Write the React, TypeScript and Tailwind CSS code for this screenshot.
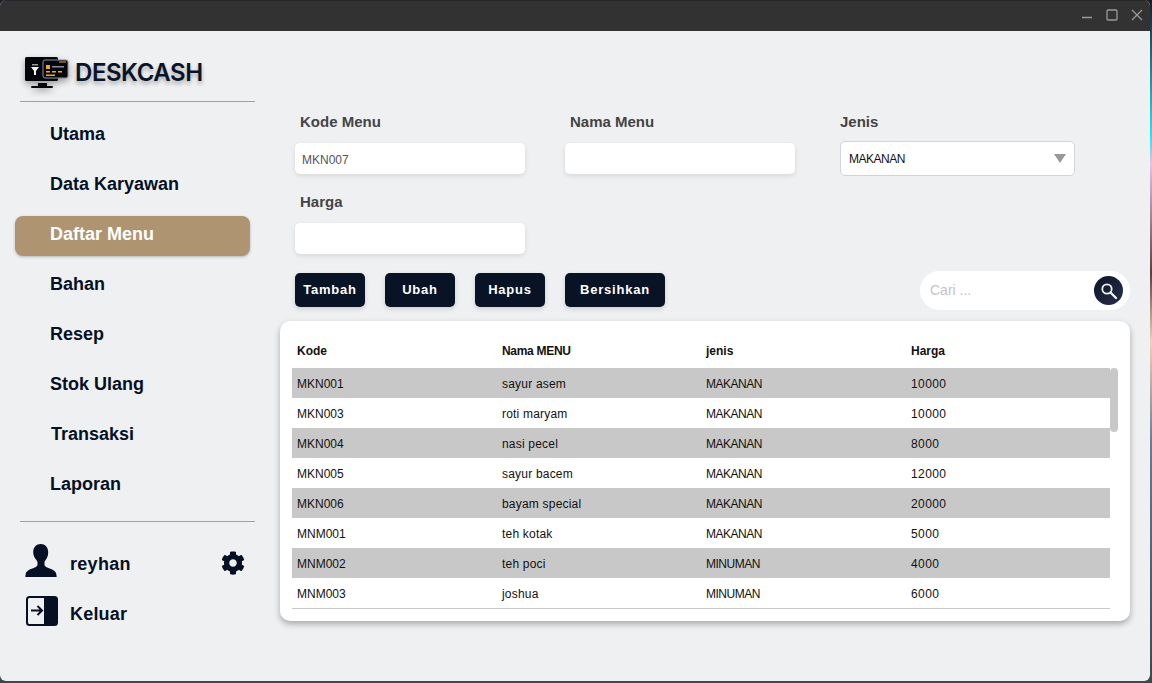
import { FaCog } from "react-icons/fa";

const navItems = ["Utama", "Data Karyawan", "Daftar Menu", "Bahan", "Resep", "Stok Ulang", "Transaksi", "Laporan"];

const rows = [
  ["MKN001", "sayur asem", "MAKANAN", "10000"],
  ["MKN003", "roti maryam", "MAKANAN", "10000"],
  ["MKN004", "nasi pecel", "MAKANAN", "8000"],
  ["MKN005", "sayur bacem", "MAKANAN", "12000"],
  ["MKN006", "bayam special", "MAKANAN", "20000"],
  ["MNM001", "teh kotak", "MAKANAN", "5000"],
  ["MNM002", "teh poci", "MINUMAN", "4000"],
  ["MNM003", "joshua", "MINUMAN", "6000"],
];

function LogoIcon() {
  return (
    <svg width="46" height="34" viewBox="0 0 46 34" className="drop-shadow-[0_3px_3px_rgba(0,0,0,0.35)]">
      <rect x="0" y="1" width="33" height="24" rx="1.5" fill="#05060c" />
      <rect x="13" y="27" width="9" height="3" fill="#05060c" />
      <rect x="6" y="30" width="22" height="2" rx="1" fill="#05060c" />
      <path d="M6 11h8l-3 4v4h-2v-4z" fill="#f4f4f4" />
      <rect x="7" y="8" width="6" height="1.5" fill="#9a9a9a" />
      <rect x="18" y="4" width="25" height="18" rx="2" fill="#05060c" stroke="#8a8f98" strokeWidth="1" />
      <rect x="21" y="9" width="4" height="4" fill="#f5a623" />
      <rect x="27" y="10" width="12" height="1.5" fill="#8a8f98" />
      <rect x="34" y="5.5" width="7" height="1" fill="#f5a623" />
      <rect x="21" y="15" width="4" height="1.5" fill="#f5a623" />
      <rect x="27" y="15" width="4" height="1.5" fill="#f5a623" />
      <rect x="33" y="15" width="4" height="1.5" fill="#f5a623" />
      <rect x="21" y="18.500" width="9" height="1.5" fill="#f5a623" />
    </svg>
  );
}

function UserIcon() {
  return (
    <svg width="32" height="34" viewBox="0 0 32 34" fill="#051024">
      <path d="M15.700 0c4.400 0 7.500 3.200 7.500 8.200 0 3.300-1.200 6.300-2.900 8.200-.6.700-.8 1.300-.8 2.200v2.200c0 1.500 1.500 2.300 3.800 3.200 3.700 1.300 7.300 2.700 8 6l.4 3H.3l.4-3c.7-3.300 4.300-4.700 8-6 2.300-.9 3.800-1.700 3.800-3.200v-2.200c0-.9-.2-1.500-.8-2.200-1.700-1.900-3.500-4.900-3.500-8.200C8.200 3.200 11.300 0 15.700 0z" />
    </svg>
  );
}

function ExitIcon() {
  return (
    <svg width="34" height="32" viewBox="0 0 34 32">
      <rect x="1" y="1" width="32" height="30" rx="3.500" fill="#051024" />
      <path d="M3 4.500A1.500 1.500 0 0 1 4.500 3H19v26H4.500A1.500 1.500 0 0 1 3 27.500z" fill="#eff0f2" />
      <path d="M6 15.500h10.500M12.500 11l4.500 4.500-4.500 4.500" fill="none" stroke="#051024" strokeWidth="2" />
    </svg>
  );
}

function Sidebar() {
  return (
    <aside className="flex w-[280px] shrink-0 flex-col pt-[25px]">
      <div className="ml-[25px] flex h-[34px] items-center gap-[4px]">
        <LogoIcon />
        <span className="font-['Inter',sans-serif] text-[24px] font-semibold tracking-[-0.45px] text-[#0a1428] [text-shadow:0_3px_4px_rgba(0,0,0,0.3)]">
          DESKCASH
        </span>
      </div>
      <div className="ml-[20px] mt-[11px] h-px w-[235px] bg-[#98a2ad]" />
      <nav className="mt-[12px] flex flex-col gap-[10px]">
        {navItems.map((item) => (
          <div
            key={item}
            className={
              item === "Daftar Menu"
                ? "-mb-[2px] ml-[15px] mt-[2px] flex h-[40px] w-[235px] items-center rounded-[8px] bg-[#ae9471] pb-[4px] pl-[35px] text-[18px] font-bold text-white shadow-[0_1px_3px_rgba(0,0,0,0.25)]"
                : item === "Transaksi"
                  ? "ml-[15px] flex h-[40px] w-[235px] items-center pl-[36px] text-[18px] font-bold text-[#051024]"
                  : "ml-[15px] flex h-[40px] w-[235px] items-center pl-[35px] text-[18px] font-bold text-[#051024]"
            }
          >
            {item}
          </div>
        ))}
      </nav>
      <div className="ml-[20px] mt-[17px] h-px w-[235px] bg-[#98a2ad]" />
      <div className="ml-[25px] mt-[22px] flex h-[34px] w-[220px] items-start">
        <UserIcon />
        <span className="ml-[13px] mt-[7px] flex-1 text-[18px] font-bold tracking-[0.3px] text-[#051024]">reyhan</span>
        <FaCog className="mt-[7px] text-[24px] text-[#051024]" />
      </div>
      <div className="ml-[25px] mt-[17px] flex h-[34px] items-start">
        <ExitIcon />
        <span className="ml-[11px] mt-[6px] text-[18px] font-bold tracking-[0.2px] text-[#051024]">Keluar</span>
      </div>
    </aside>
  );
}

function Field({ label, value }: { label: string; value?: string }) {
  return (
    <div className="w-[230px]">
      <div className="h-[20px] pl-[5px] text-[15px] font-bold leading-[20px] text-[#444444]">{label}</div>
      <div className="mt-[11px] flex h-[31px] items-center rounded-[5px] bg-white pl-[7px] pt-[2px] text-[12px] text-[#555555] shadow-[0_2px_5px_rgba(0,0,0,0.1)]">
        {value}
      </div>
    </div>
  );
}

function Form() {
  return (
    <div className="ml-[15px] flex w-[795px] flex-col">
      <div className="flex">
        <Field label="Kode Menu" value="MKN007" />
        <div className="ml-[40px]">
          <Field label="Nama Menu" />
        </div>
        <div className="ml-[45px] w-[235px]">
          <div className="h-[20px] text-[15px] font-bold leading-[20px] text-[#444444]">Jenis</div>
          <div className="mt-[9px] flex h-[35px] items-center justify-between rounded-[5px] border border-[#d0d4da] bg-white pl-[8px] pr-[8px] text-[12px] tracking-[-0.5px] text-[#111111]">
            MAKANAN
            <span className="h-0 w-0 border-x-[6px] border-t-[9px] border-x-transparent border-t-[#999999]" />
          </div>
        </div>
      </div>
      <div className="mt-[16px]">
        <Field label="Harga" />
      </div>
    </div>
  );
}

function Actions() {
  const buttons = [
    { label: "Tambah", w: "w-[70px]" },
    { label: "Ubah", w: "w-[70px]" },
    { label: "Hapus", w: "w-[70px]" },
    { label: "Bersihkan", w: "w-[100px]" },
  ];
  return (
    <div className="ml-[15px] mr-[20px] mt-[16px] flex h-[39px] items-center justify-between">
      <div className="flex gap-[20px]">
        {buttons.map((b) => (
          <div
            key={b.label}
            className={`${b.w} flex h-[34px] items-center justify-center rounded-[5px] bg-[#081325] text-[13px] font-bold tracking-[0.8px] text-white shadow-[0_2px_5px_rgba(0,0,0,0.15)]`}
          >
            {b.label}
          </div>
        ))}
      </div>
      <div className="mt-[2px] flex h-[39px] w-[210px] items-center justify-between rounded-full bg-white pl-[10px] pr-[7px] text-[14px] text-[#c4c4c4]">
        Cari ...
        <span className="flex h-[29px] w-[29px] items-center justify-center rounded-full bg-gradient-to-br from-[#0b1428] to-[#27304a]">
          <svg width="18" height="18" viewBox="0 0 18 18" fill="none" stroke="#f2f2f2">
            <circle cx="7" cy="7" r="4.700" strokeWidth="1.800" />
            <path d="M10.500 10.500 16 16" strokeWidth="2.400" strokeLinecap="round" />
          </svg>
        </span>
      </div>
    </div>
  );
}

function MenuTable() {
  return (
    <div className="mr-[20px] mt-[12px] flex h-[300px] flex-col rounded-[10px] bg-white px-[12px] shadow-[0_3px_6px_rgba(0,0,0,0.3)]">
      <div className="grid h-[47px] w-[818px] shrink-0 grid-cols-[205px_204px_205px_1fr] items-center pl-[5px] pt-[13px] text-[12px] font-bold text-[#111111]">
        <span>Kode</span>
        <span className="tracking-[-0.3px]">Nama MENU</span>
        <span>jenis</span>
        <span>Harga</span>
      </div>
      <div className="relative h-[241px] w-[818px] border-b border-[#c8c8c8]">
        {rows.map((row, i) => (
          <div
            key={row[0]}
            className={`grid h-[30px] grid-cols-[205px_204px_205px_1fr] items-center pl-[5px] pt-[2px] text-[12px] text-[#111111] ${
              i % 2 === 0 ? "bg-[#c8c8c8]" : "bg-white"
            }`}
          >
            <span>{row[0]}</span>
            <span className="tracking-[0.2px]">{row[1]}</span>
            <span className="tracking-[-0.5px]">{row[2]}</span>
            <span className="tracking-[0.4px]">{row[3]}</span>
          </div>
        ))}
        <div className="absolute left-[818px] top-0 h-[64px] w-[8px] rounded-full bg-[#c8c8c8]" />
      </div>
    </div>
  );
}

export default function App() {
  return (
    <div className="flex h-[683px] w-[1152px] flex-col overflow-hidden bg-[linear-gradient(180deg,#1a1a24_0%,#30e0f0_20%,#e8c0e0_24%,#5a4040_40%,#f0d0b8_50%,#6a7a90_65%,#3a4a4a_100%)] font-['Liberation_Sans',sans-serif]">
      <div className="flex h-[681px] w-[1150px] flex-col overflow-hidden rounded-[6px] bg-[#eff0f2]">
        <div className="flex h-[31px] shrink-0 items-center justify-end gap-[13px] border-t border-[#23272a] bg-[#323232] pb-[3px] pr-[7px]">
          <svg width="12" height="12" viewBox="0 0 12 12" stroke="#9a9a9a" strokeWidth="1.500">
            <path d="M1 8.500h10" />
          </svg>
          <svg width="12" height="12" viewBox="0 0 12 12" fill="none" stroke="#9a9a9a" strokeWidth="1.300">
            <rect x="1" y="1" width="10" height="10" rx="1" />
          </svg>
          <svg width="12" height="12" viewBox="0 0 12 12" stroke="#9a9a9a" strokeWidth="1.300">
            <path d="M1 1l10 10M11 1 1 11" />
          </svg>
        </div>
        <div className="flex flex-1">
          <Sidebar />
          <main className="flex flex-1 flex-col pt-[81px]">
            <Form />
            <Actions />
            <MenuTable />
          </main>
        </div>
      </div>
    </div>
  );
}
